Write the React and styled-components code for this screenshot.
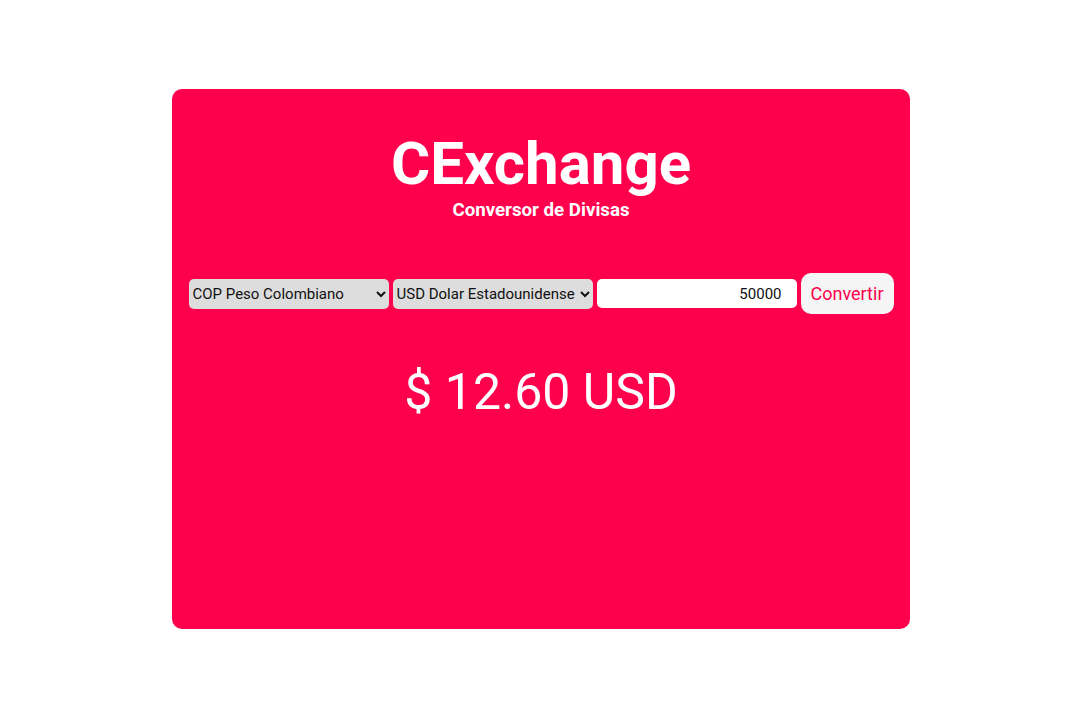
import React, { useState } from "react";
import styled, { createGlobalStyle } from "styled-components";

const GlobalStyle = createGlobalStyle`
  body {
    margin: 0;
    background: #ffffff;
    font-family: Roboto, "Liberation Sans", sans-serif;
  }
`;

const Page = styled.div`
  display: flex;
  justify-content: center;
  padding: 89px 0 0 2px;
  height: 720px;
  box-sizing: border-box;
`;

const Card = styled.div`
  width: 738px;
  height: 540px;
  background: #ff004d;
  border-radius: 10px;
  color: #ffffff;
  display: flex;
  flex-direction: column;
  align-items: center;
  box-sizing: border-box;
  padding-top: 40px;
`;

const Title = styled.h1`
  margin: 0;
  font-size: 60px;
  font-weight: 700;
  line-height: 70px;
`;

const Subtitle = styled.h3`
  margin: 0;
  font-size: 18.7px;
  font-weight: 700;
  line-height: 23px;
`;

const Form = styled.div`
  display: flex;
  align-items: center;
  gap: 4px;
  margin-top: 51px;
`;

const Select = styled.select`
  width: 200px;
  height: 30px;
  background: #dddddd;
  border: none;
  border-radius: 5px;
  font-family: Roboto, "Liberation Sans", sans-serif;
  font-size: 15px;
  color: #111111;
  padding: 0;
`;

const Amount = styled.input`
  width: 200px;
  height: 29px;
  box-sizing: border-box;
  background: #ffffff;
  border: none;
  border-radius: 5px;
  font-family: Roboto, "Liberation Sans", sans-serif;
  font-size: 15px;
  text-align: right;
  padding: 0 15px 0 4px;
  color: #111111;
`;

const Button = styled.button`
  height: 41px;
  width: 93px;
  background: #f5f5f5;
  color: #ff004d;
  border: none;
  border-radius: 10px;
  font-family: Roboto, "Liberation Sans", sans-serif;
  font-size: 18px;
  cursor: pointer;
`;

const Result = styled.p`
  margin: 49px 0 0;
  font-size: 50px;
  font-weight: 400;
  line-height: 58px;
`;

const App = () => {
  const [from, setFrom] = useState("COP");
  const [to, setTo] = useState("USD");
  const [amount, setAmount] = useState("50000");
  return (
    <>
      <GlobalStyle />
      <Page>
        <Card>
          <Title>CExchange</Title>
          <Subtitle>Conversor de Divisas</Subtitle>
          <Form>
            <Select value={from} onChange={(e) => setFrom(e.target.value)}>
              <option value="COP">COP Peso Colombiano</option>
              <option value="USD">USD Dolar Estadounidense</option>
              <option value="EUR">EUR Euro</option>
            </Select>
            <Select value={to} onChange={(e) => setTo(e.target.value)}>
              <option value="COP">COP Peso Colombiano</option>
              <option value="USD">USD Dolar Estadounidense</option>
              <option value="EUR">EUR Euro</option>
            </Select>
            <Amount
              type="text"
              value={amount}
              onChange={(e) => setAmount(e.target.value)}
            />
            <Button>Convertir</Button>
          </Form>
          <Result>$ 12.60 USD</Result>
        </Card>
      </Page>
    </>
  );
};

export default App;
